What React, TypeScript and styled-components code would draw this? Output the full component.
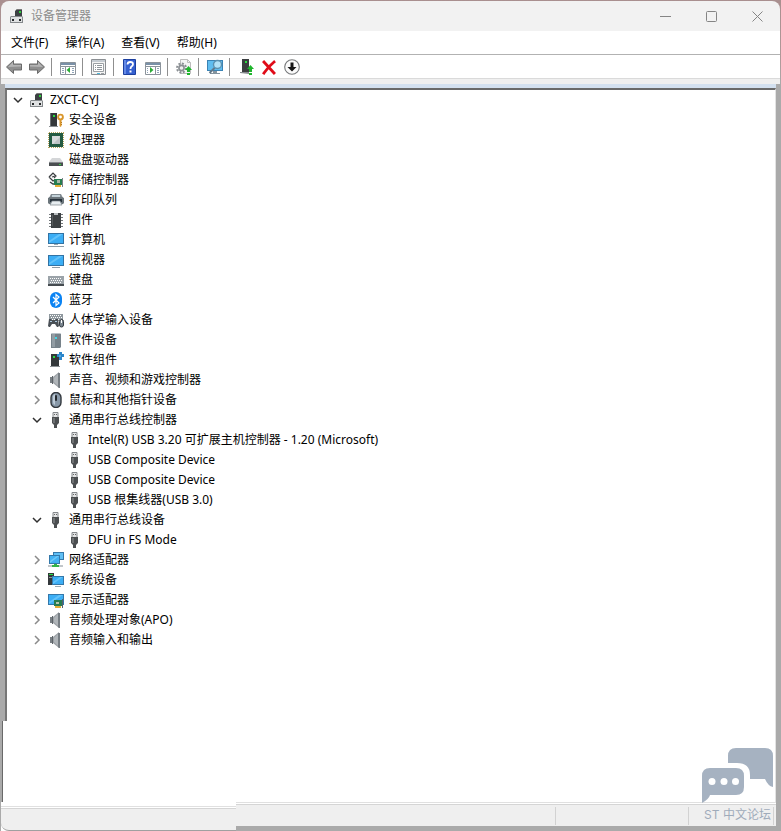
import React, { useState } from "react";
import styled, { createGlobalStyle } from "styled-components";

const GlobalStyle = createGlobalStyle`
  *, *::before, *::after { box-sizing: border-box; }
  body {
    margin: 0;
    background: #aaaaaa;
    color: #000;
    font: 12px/20px "Noto Sans", "Noto Sans CJK SC", sans-serif;
  }
  button { font: inherit; color: inherit; background: none; border: 0; padding: 0; }
  ul { list-style: none; margin: 0; padding: 0; }
`;

const Desktop = styled.div`
  display: flex;
  min-height: 100vh;
  background: linear-gradient(#a98f8f 0, #b09a9a 60px, #aaaaaa 84px);
`;

const Window = styled.div`
  position: relative;
  flex: 1;
  min-width: 0;
  display: flex;
  flex-direction: column;
  padding: 1px 1px 0;
`;

const TitleBar = styled.header`
  display: flex;
  align-items: center;
  height: 30px;
  padding-left: 8px;
  background: #f2f2f2;
  border-radius: 8px 8px 0 0;
  color: #8d8d8d;
`;

const Title = styled.h1`
  flex: 1;
  margin: 0 0 0 6px;
  font-size: 12px;
  font-weight: 400;
  line-height: 20px;
`;

const CaptionButton = styled.button`
  display: grid;
  place-items: center;
  width: 46px;
  height: 29px;
`;

const MenuBar = styled.nav`
  display: flex;
  gap: 1px;
  height: 24px;
  padding-left: 2px;
  background: #fff;
  border-bottom: 1px solid #b2b2b2;
`;

const MenuButton = styled.button`
  padding: 0 8px;
`;

const ToolBar = styled.div`
  display: flex;
  align-items: center;
  height: 24px;
  padding-left: 2px;
  background: #fff;
  border-bottom: 1px solid #dadada;
`;

const ToolButton = styled.button`
  width: 23px;
  height: 22px;
  padding: 3px;
`;

const Separator = styled.span`
  width: 8px;
  height: 18px;
  padding-left: 2px;
  &::before { content: ""; display: block; width: 1px; height: 100%; background: #8f8f8f; }
`;

const Strip = styled.div`
  height: 5px;
  background: #efefef;
`;

const Body = styled.main`
  flex: 1;
  display: flex;
  flex-direction: column;
  margin-right: 4px;
`;

const TreeFrame = styled.section`
  display: flex;
  flex-direction: column;
  margin-left: 4px;
  height: 637px;
  border-top: 4px solid #d3e0ef;
`;

const TreePanel = styled.div`
  flex: 1;
  background: #fff;
  border: solid #696969;
  border-width: 2px 1px 0 2px;
  border-left-color: #777;
  border-right-color: #e3e3e3;
`;

const Blank = styled.div`
  flex: 1;
  margin-left: 1px;
  background: #fff;
  border-left: 1px solid #696969;
  border-right: 1px solid #e3e3e3;
`;

const Row = styled.div<{ $level: number }>`
  display: flex;
  align-items: center;
  height: 20px;
  padding-left: ${(p) => 1 + p.$level * 19}px;
  white-space: nowrap;
`;

const Expander = styled.button`
  display: grid;
  place-items: center;
  width: 19px;
  height: 20px;
  margin-right: 2px;
`;

const Spacer = styled.span`
  width: 21px;
`;

const Label = styled.span`
  margin-left: 5px;
`;

const Glyph = styled.svg`
  display: block;
  flex: none;
  width: 16px;
  height: 16px;
`;

const StatusRow = styled.footer`
  display: flex;
  align-items: stretch;
`;

const StatusLeft = styled.div`
  width: 30.2%;
  height: 29px;
  padding-top: 4px;
  background: #fff;
`;

const StatusFill = styled.div<{ $round?: boolean }>`
  height: ${(p) => (p.$round ? 25 : 24)}px;
  background: #efefef;
  border-top: 1px solid #e0e0e0;
  box-shadow: inset 0 1px #fff, inset 0 2px #d5d5d5;
  border-bottom: ${(p) => (p.$round ? "1px solid #a0a0a0" : "0")};
  border-bottom-left-radius: ${(p) => (p.$round ? 8 : 0)}px;
`;

const StatusRight = styled.div`
  flex: 1;
  padding-right: 4px;
  background: #aaaaaa;
`;

const StatusCells = styled(StatusFill)`
  display: flex;
  justify-content: flex-end;
  padding: 4px 2px 1px 0;
`;

const StatusCell = styled.span<{ $width: number }>`
  width: ${(p) => p.$width}px;
  border-left: 1px solid #d2d2d2;
  &:last-child { border-right: 1px solid #d2d2d2; }
`;

const Watermark = styled.div`
  position: absolute;
  right: 8px;
  bottom: 5px;
  display: flex;
  flex-direction: column;
  align-items: center;
  color: #9fabba;
  font: 12px/22px "Inter", "Noto Sans CJK SC", sans-serif;
`;

const Bubbles = styled.svg`
  display: block;
  width: 71px;
  height: 56px;
`;

const art: Record<string, React.ReactNode> = {
  manager: (
    <>
      <path d="M1 15V9l1-1h11l1 1v6z" fill="#85898c" />
      <path d="M2 9h11v5H2z" fill="#dfe1e2" />
      <path d="M6 3l2-2h5v7H6z" fill="#3c4043" />
      <path d="M8 1h5v1H8z" fill="#777" />
      <path d="M10 3h2v2h-2z" fill="#2fd13c" />
      <path d="M3 11h2v2H3zM10 11h2v2h-2z" fill="#26292b" />
    </>
  ),
  security: (
    <>
      <path d="M2 1h7v13H2z" fill="#34383b" />
      <path d="M1 14h9v1H1z" fill="#8a8f93" />
      <path d="M2 1h1v13H2z" fill="#6c7174" />
      <path d="M5 3h2v2H5z" fill="#2be03f" />
      <circle cx="12.500" cy="5" r="2.400" fill="none" stroke="#d9962b" strokeWidth="1.900" />
      <path d="M11.500 7h2v7l-1 1-1-1z" fill="#d9962b" />
      <path d="M13 10h1v1h-1zM13 12h1v1h-1z" fill="#b97a1b" />
    </>
  ),
  cpu: (
    <>
      <path d="M1 .5h15M1 15.500h15M.5 1v15M15.500 1v15" stroke="#b6a45d" strokeWidth="1" strokeDasharray="1 1" />
      <path d="M1 1h14v14H1z" fill="#245b43" />
      <path d="M4 4h8v8H4z" fill="#d6dadb" />
      <path d="M5 12l7-7v7z" fill="#bdc3c5" />
    </>
  ),
  disk: (
    <>
      <path d="M4 6h8l3 4H1z" fill="#d4d6d8" />
      <path d="M1 10h14v4H1z" fill="#4a4e51" />
      <path d="M1 10h14v1H1z" fill="#85898c" />
      <path d="M11 12h2v1h-2z" fill="#30d93f" />
    </>
  ),
  storage: (
    <>
      <path d="M1 5l4-4 3 3-2 2M1 5l4 4 2-1" fill="#eee" stroke="#3c3f42" strokeWidth="1.200" />
      <path d="M4 5l3-1" stroke="#3c3f42" />
      <path d="M2 10l3 2h2" fill="none" stroke="#3c3f42" strokeWidth="1.400" />
      <path d="M6 7h8v6H6z" fill="#277d50" />
      <path d="M14 6h1v9h-1z" fill="#7a8288" />
      <path d="M9 8h3v3H9z" fill="#a8b6a6" />
      <path d="M7 13h6v2H7z" fill="#e3ae38" />
    </>
  ),
  printer: (
    <>
      <path d="M3 2h10l2 4H1z" fill="#818b92" />
      <path d="M4 3h8v2H4z" fill="#c2d1d8" />
      <path d="M0 6l2-1h12l2 1v5l-1 1H1l-1-1z" fill="#6b757b" />
      <path d="M2 7h12v3H2z" fill="#25313a" />
      <path d="M4 9h8l2 4H2z" fill="#e7edf0" stroke="#788288" strokeWidth=".7" />
    </>
  ),
  firmware: (
    <>
      <path d="M1 2.500h14M1 5.500h14M1 8.500h14M1 11.500h14M1 14.500h14" stroke="#74797c" strokeWidth="1" />
      <path d="M3 1h10v15H3z" fill="#3d4143" />
      <path d="M6 1h4v2H6z" fill="#b9bdbf" />
      <path d="M4 3h1v11H4z" fill="#575b5d" />
    </>
  ),
  computer: (
    <>
      <path d="M0 1h16v11H0z" fill="#3273a4" />
      <path d="M1 2h14v9H1z" fill="#3caef5" />
      <path d="M1 11V9l10-7h4z" fill="#64c3fa" />
      <path d="M6 12h4v1H6z" fill="#9ba9b2" />
      <path d="M0 14h16v1H0z" fill="#8e9ca6" />
    </>
  ),
  monitor: (
    <>
      <path d="M0 3h16v11H0z" fill="#3273a4" />
      <path d="M1 4h14v9H1z" fill="#3caef5" />
      <path d="M1 13v-2l10-7h4z" fill="#64c3fa" />
      <path d="M4 15h8v1H4z" fill="#8e9ca6" />
    </>
  ),
  keyboard: (
    <>
      <path d="M0 4h16v8H0z" fill="#9ba3a9" />
      <path d="M0 12h16v2H0z" fill="#454b50" />
      <path d="M2 6.500h12M3 8.500h11M2 10.500h12" stroke="#fff" strokeWidth="1" strokeDasharray="1 1" />
    </>
  ),
  bluetooth: (
    <>
      <rect x="2" width="12" height="16" rx="6" fill="#0a83f3" />
      <path d="M5 5l6 6-3 2.500v-11L11 5l-6 6" fill="none" stroke="#fff" strokeWidth="1.200" />
    </>
  ),
  hid: (
    <>
      <path d="M1 2h14v7H1z" fill="#8f989e" />
      <path d="M2 3.500h12M3 5.500h11M2 7.500h12" stroke="#fff" strokeDasharray="1 1" />
      <path d="M0 14l1-7h2l1 1h3l1-1h2l1 7-1 1h-1l-2-3H4l-2 3H1z" fill="#4a5056" />
      <path d="M2 9h2v1H2zM7 9h2v1H7z" fill="#aac8e0" />
      <rect x="11.500" y="7.500" width="4" height="7.500" rx="2" fill="#7a858f" stroke="#343a40" />
      <path d="M13.500 8v3" stroke="#fff" />
    </>
  ),
  software: (
    <>
      <path d="M3 2l2-1h6l2 1v13l-1 1H3z" fill="#77828a" />
      <path d="M4 1h8l1 1H3z" fill="#b9c1c7" />
      <path d="M4 2h3v13H4z" fill="#929ca3" />
      <path d="M7 5h2v2H7z" fill="#41d6e6" />
    </>
  ),
  component: (
    <>
      <path d="M3 2h8v12H3z" fill="#34383b" />
      <path d="M2 14h10v1H2z" fill="#8a8f93" />
      <path d="M5 4h2v2H5z" fill="#2be03f" />
      <path d="M11 0h3v2h2v3h-2v3h-3V5H9V2h2z" fill="#2b86ca" />
      <path d="M11 3h2v2h-2z" fill="#56a9e2" />
    </>
  ),
  speaker: (
    <>
      <path d="M2 5h3v6H2z" fill="#787e83" />
      <path d="M5 5l6-5v16l-6-5z" fill="#9a9fa4" />
      <path d="M6 6l4-4v12l-4-4z" fill="#b0b5b9" />
      <path d="M10 1h2v15h-1l-1-1z" fill="#777e84" />
      <path d="M4 4h1v8H4z" fill="#5c6267" />
    </>
  ),
  mouse: (
    <>
      <rect x="3" y=".5" width="10" height="15" rx="5" fill="#8898a8" stroke="#33383e" strokeWidth="1.400" />
      <path d="M5 4q1-2 2-2v11Q5 12 5 10z" fill="#bdcad6" />
      <rect x="7" y="3" width="2" height="6" rx="1" fill="#24292e" />
    </>
  ),
  usb: (
    <>
      <path d="M5 5V.5h5V5" fill="#e3e4e5" stroke="#85898c" />
      <path d="M6 2h1v1H6zM8 2h1v1H8z" fill="#666" />
      <path d="M4 5h7v6l-2 2v3H6v-3l-2-2z" fill="#4c4f51" />
      <path d="M5 6h2v5H5z" fill="#707375" />
    </>
  ),
  network: (
    <>
      <path d="M5 0h11v8H5z" fill="#3478aa" />
      <path d="M6 1h9v6H6z" fill="#5fbff5" />
      <path d="M1 3h11v9H1z" fill="#3478aa" />
      <path d="M2 4h9v7H2z" fill="#43b1f2" />
      <path d="M2 11V9l7-5h2z" fill="#70caf9" />
      <path d="M0 13h15v2H0z" fill="#c1c6ca" />
      <path d="M6 12h3v1h2v2H4v-2h2z" fill="#35b34a" />
    </>
  ),
  system: (
    <>
      <path d="M0 1h6v12H0z" fill="#34383b" />
      <path d="M1 2h4v1H1z" fill="#2be03f" />
      <path d="M1 5h3v1H1z" fill="#8d9295" />
      <path d="M4 4h12v9H4z" fill="#3478aa" />
      <path d="M5 5h10v7H5z" fill="#3caef5" />
      <path d="M5 12v-2l7-5h3z" fill="#64c3fa" />
      <path d="M7 14h6v1H7z" fill="#9ba9b2" />
    </>
  ),
  display: (
    <>
      <path d="M0 2h16v11H0z" fill="#3478aa" />
      <path d="M1 3h14v9H1z" fill="#3caef5" />
      <path d="M1 12v-2l10-7h4z" fill="#64c3fa" />
      <path d="M6 8h9v6H6z" fill="#277d50" />
      <path d="M8 10h3v2H8z" fill="#b5c5ae" />
      <path d="M14 7h1v9h-1z" fill="#596168" />
      <path d="M7 14h6v2H7z" fill="#e3ae38" />
    </>
  ),
  back: (
    <>
      <path d="M.5 8L7.500 1.500V5h8v6h-8v3.500z" fill="#8f8f8f" stroke="#6b6b6b" strokeLinejoin="round" />
      <path d="M2 8l5-5v3h8v1.500z" fill="#b4b4b4" />
    </>
  ),
  forward: (
    <>
      <path d="M15.500 8L8.500 1.500V5h-8v6h8v3.500z" fill="#8f8f8f" stroke="#6b6b6b" strokeLinejoin="round" />
      <path d="M14 8L9 3v3H1v1.500z" fill="#b4b4b4" />
    </>
  ),
  console: (
    <>
      <path d="M.5 3.500h15v12H.5z" fill="#fff" stroke="#8b939b" />
      <path d="M1 4h14v2H1z" fill="#7a91a8" />
      <path d="M1 7.500h14M5.500 7v8" stroke="#8b939b" />
      <path d="M2 9h2v1H2zM2 11h2v1H2zM2 13h2v1H2zM12 9h2v1h-2zM12 11h2v1h-2zM12 13h2v1h-2z" fill="#90a4b8" />
      <path d="M10 8v6L6.500 11z" fill="#2bac36" />
    </>
  ),
  properties: (
    <>
      <path d="M.5.5h14v15H.5z" fill="#f4f4f4" stroke="#8b8f93" />
      <path d="M1 1h13v2H1z" fill="#c5ccd2" />
      <path d="M2.500 4.500h10v8h-10z" fill="#fff" stroke="#9ba0a4" />
      <path d="M4 6.500h1M6 6.500h5M4 8.500h1M6 8.500h5M4 10.500h1M6 10.500h5" stroke="#8f969b" />
      <path d="M6 14h3v1H6z" fill="#4db8dc" />
      <path d="M10 14h3v1h-3z" fill="#9ba0a4" />
    </>
  ),
  help: (
    <>
      <path d="M1.500.5h12v15h-12z" fill="#3560d0" stroke="#1c3f9e" />
      <path d="M2 1h2v14H2z" fill="#6389e6" />
      <path d="M5.500 5.500Q5.500 3 8.300 3 11 3 11 5.200q0 1.400-1.500 2.300-1 .7-1 2.500" fill="none" stroke="#fff" strokeWidth="1.800" />
      <path d="M7.500 11.500h2v2h-2z" fill="#fff" />
    </>
  ),
  actionPane: (
    <>
      <path d="M.5 3.500h15v12H.5z" fill="#fff" stroke="#8b939b" />
      <path d="M1 4h14v2H1z" fill="#7a91a8" />
      <path d="M1 7.500h14M10.500 7v8" stroke="#8b939b" />
      <path d="M2 9h1v1H2zM2 11h1v1H2zM2 13h1v1H2zM12 9h2v1h-2zM12 11h2v1h-2zM12 13h2v1h-2z" fill="#90a4b8" />
      <path d="M5 8v6l3.500-3z" fill="#2bac36" />
    </>
  ),
  scan: (
    <>
      <path d="M4.500.5h7l3 3v11h-10z" fill="#f4f4f4" stroke="#bdbdbd" />
      <path d="M11.500.5v3h3" fill="none" stroke="#bdbdbd" />
      <circle cx="5.500" cy="9" r="4.500" fill="none" stroke="#8b9094" strokeWidth="2" strokeDasharray="2 1.500" />
      <circle cx="5.500" cy="9" r="2.600" fill="#eee" stroke="#8b9094" strokeWidth="1.600" />
      <path d="M12.500 7L16 11h-2v2h-3v-2H9z" fill="#1fb52c" />
      <path d="M11 14h3v2h-3z" fill="#1fb52c" />
    </>
  ),
  scanMonitor: (
    <>
      <path d="M0 1h16v11H0z" fill="#3b83b4" />
      <path d="M1 2h14v9H1z" fill="#5fbdf0" />
      <path d="M6 12h4v2h3v1H3v-1h3z" fill="#85949f" />
      <path d="M8 8.500L2.500 14" stroke="#62798a" strokeWidth="2" />
      <circle cx="10.500" cy="5.500" r="4" fill="#b2e2f8" stroke="#5a91b1" strokeWidth="1.400" />
    </>
  ),
  update: (
    <>
      <path d="M4 0h7v13H4z" fill="#3b3e40" />
      <path d="M2 13h9v2l-9-1z" fill="#858a8d" />
      <path d="M7 2h2v2H7z" fill="#2be03f" />
      <path d="M12.500 6L16 10h-2v3h-3v-3H9z" fill="#1fb52c" />
      <path d="M11 14h3v2h-3z" fill="#1fb52c" />
    </>
  ),
  remove: <path d="M3 3l10 11M13 3Q7 8 3 14" fill="none" stroke="#e00b18" strokeWidth="2.800" strokeLinecap="square" />,
  disable: (
    <>
      <circle cx="8" cy="8" r="7.300" fill="#fbfbfb" stroke="#77797b" strokeWidth="1.100" />
      <path d="M6.500 3.500h3V8h3L8 12.500 3.500 8h3z" fill="#161616" />
    </>
  ),
};

const Icon = ({ name }: { name: string }) => (
  <Glyph viewBox="0 0 16 16" aria-hidden="true">{art[name]}</Glyph>
);

const Chevron = ({ open }: { open: boolean }) => (
  <svg width="10" height="10" viewBox="0 0 10 10" fill="none" aria-hidden="true">
    {open ? (
      <path d="M1 3l4 4 4-4" stroke="#303030" strokeWidth="1.500" />
    ) : (
      <path d="M3 1l4 4-4 4" stroke="#8a8a8a" strokeWidth="1.500" />
    )}
  </svg>
);

interface Device {
  icon: string;
  label: string;
  open?: boolean;
  children?: Device[];
}

const group = (icon: string, label: string): Device => ({ icon, label, children: [] });
const usb = (label: string): Device => ({ icon: "usb", label });

const tree: Device = {
  icon: "manager",
  label: "ZXCT-CYJ",
  open: true,
  children: [
    group("security", "安全设备"),
    group("cpu", "处理器"),
    group("disk", "磁盘驱动器"),
    group("storage", "存储控制器"),
    group("printer", "打印队列"),
    group("firmware", "固件"),
    group("computer", "计算机"),
    group("monitor", "监视器"),
    group("keyboard", "键盘"),
    group("bluetooth", "蓝牙"),
    group("hid", "人体学输入设备"),
    group("software", "软件设备"),
    group("component", "软件组件"),
    group("speaker", "声音、视频和游戏控制器"),
    group("mouse", "鼠标和其他指针设备"),
    {
      icon: "usb",
      label: "通用串行总线控制器",
      open: true,
      children: [
        usb("Intel(R) USB 3.20 可扩展主机控制器 - 1.20 (Microsoft)"),
        usb("USB Composite Device"),
        usb("USB Composite Device"),
        usb("USB 根集线器(USB 3.0)"),
      ],
    },
    { icon: "usb", label: "通用串行总线设备", open: true, children: [usb("DFU in FS Mode")] },
    group("network", "网络适配器"),
    group("system", "系统设备"),
    group("display", "显示适配器"),
    group("speaker", "音频处理对象(APO)"),
    group("speaker", "音频输入和输出"),
  ],
};

const TreeNode = ({ node, level }: { node: Device; level: number }) => {
  const [open, setOpen] = useState(Boolean(node.open));
  return (
    <li role="treeitem" aria-expanded={node.children ? open : undefined}>
      <Row $level={level}>
        {node.children ? (
          <Expander aria-label={node.label} onClick={() => setOpen(!open)}>
            <Chevron open={open} />
          </Expander>
        ) : (
          <Spacer />
        )}
        <Icon name={node.icon} />
        <Label>{node.label}</Label>
      </Row>
      {open && node.children && (
        <ul role="group">
          {node.children.map((child, i) => (
            <TreeNode key={i} node={child} level={level + 1} />
          ))}
        </ul>
      )}
    </li>
  );
};

const menus = ["文件(F)", "操作(A)", "查看(V)", "帮助(H)"];

const tools: [string, string][][] = [
  [["back", "后退"], ["forward", "前进"]],
  [["console", "显示/隐藏控制台树"]],
  [["properties", "属性"]],
  [["help", "帮助"], ["actionPane", "显示/隐藏操作窗格"]],
  [["scan", "更新驱动程序"]],
  [["scanMonitor", "扫描检测硬件改动"]],
  [["update", "启用设备"], ["remove", "卸载设备"], ["disable", "禁用设备"]],
];

const captions: [string, React.ReactNode][] = [
  ["最小化", <path d="M0 5.500h11" />],
  ["最大化", <rect x=".5" y=".5" width="10" height="10" rx="1" />],
  ["关闭", <path d="M.5.5l10 10M10.500.5l-10 10" />],
];

export default function App() {
  return (
    <Desktop>
      <GlobalStyle />
      <Window>
        <TitleBar>
          <Icon name="manager" />
          <Title>设备管理器</Title>
          {captions.map(([label, shape]) => (
            <CaptionButton key={label} aria-label={label}>
              <svg width="11" height="11" viewBox="0 0 11 11" fill="none" stroke="#858585">{shape}</svg>
            </CaptionButton>
          ))}
        </TitleBar>
        <MenuBar>
          {menus.map((m) => <MenuButton key={m}>{m}</MenuButton>)}
        </MenuBar>
        <ToolBar role="toolbar">
          {tools.map((set, i) => (
            <React.Fragment key={i}>
              {i > 0 && <Separator />}
              {set.map(([icon, label]) => (
                <ToolButton key={icon} aria-label={label}><Icon name={icon} /></ToolButton>
              ))}
            </React.Fragment>
          ))}
        </ToolBar>
        <Strip />
        <Body>
          <TreeFrame>
            <TreePanel>
              <ul role="tree"><TreeNode node={tree} level={0} /></ul>
            </TreePanel>
          </TreeFrame>
          <Blank />
        </Body>
        <StatusRow>
          <StatusLeft><StatusFill $round /></StatusLeft>
          <StatusRight>
            <StatusCells>
              <StatusCell $width={133} />
              <StatusCell $width={86} />
            </StatusCells>
          </StatusRight>
        </StatusRow>
        <Watermark>
          <Bubbles viewBox="0 0 71 56" aria-hidden="true">
            <path d="M26 15V8q0-8 8-8h29q8 0 8 8v31q-5-1-8-8H48V27Q48 15 35 15z" fill="#a6b2c1" />
            <path d="M0 55V28q0-8 8-8h26q8 0 8 8v11q0 8-8 8H8q-1 4-8 8z" fill="#a6b2c1" />
            <circle cx="10" cy="33.500" r="3.500" fill="#fff" />
            <circle cx="22" cy="33.500" r="3.500" fill="#fff" />
            <circle cx="33.500" cy="33.500" r="3.500" fill="#fff" />
          </Bubbles>
          <span>ST 中文论坛</span>
        </Watermark>
      </Window>
    </Desktop>
  );
}
